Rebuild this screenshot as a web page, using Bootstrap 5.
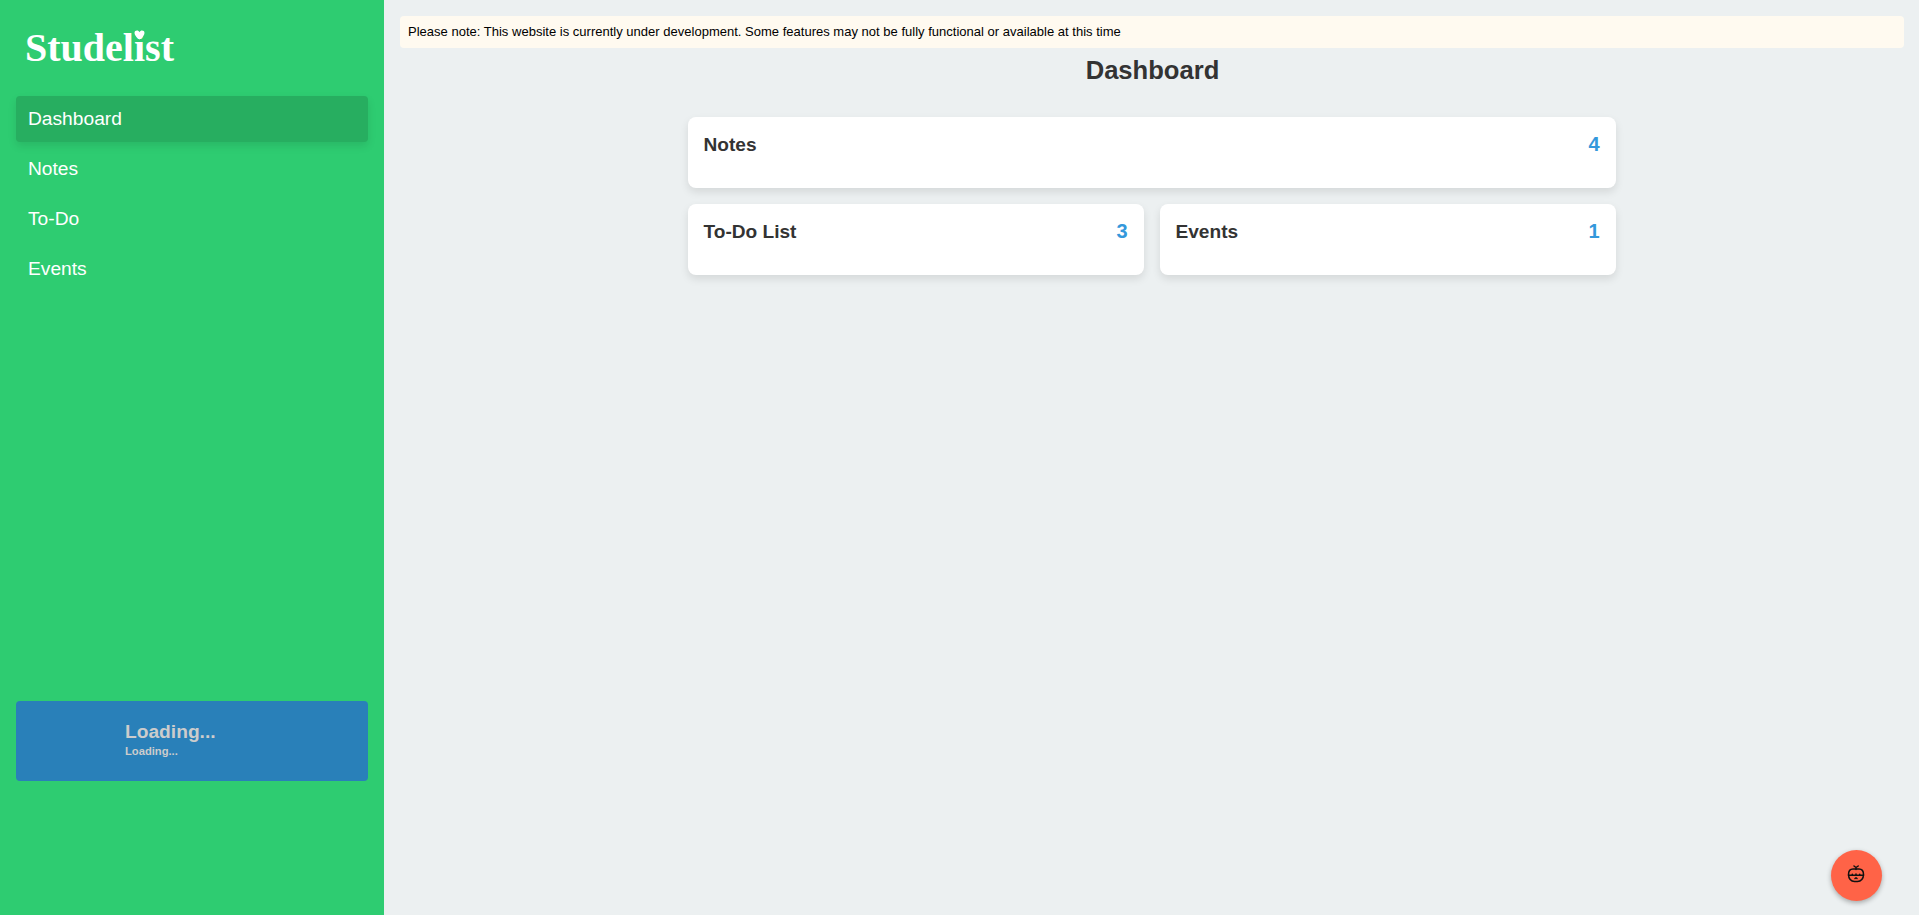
<!DOCTYPE html>
<html lang="en">
<head>
<meta charset="utf-8">
<meta name="viewport" content="width=device-width, initial-scale=1">
<title>Studelist</title>
<link rel="stylesheet" href="https://cdn.jsdelivr.net/npm/bootstrap@5.3.0/dist/css/bootstrap.min.css">
<style>
body { font-family: "Liberation Sans", Arial, sans-serif; background: #ecf0f1; color: #333; line-height: 1.2; }
.sidebar { width: 384px; background: #2ecc71; }
.brand-name { font: bold 40px/46px "Liberation Serif", serif; color: #fff; height: 64px; padding: 9px 0 0 9px; margin-bottom: 16px; }
.brand-i { position: relative; }
.brand-i svg { position: absolute; left: 0; top: 5px; width: 11px; height: 10px; }
.sidebar .nav-link { color: #fff; font-size: 19.2px; line-height: 22px; padding: 12px; border-radius: 4px; height: 46px; }
.sidebar .nav-link.active { background: #27ae60; box-shadow: 0 4px 8px rgba(0,0,0,.1); }
.account { background: #2980b9; color: #ccc; height: 80px; border-radius: 4px; margin-bottom: 118px; padding: 0 0 3px 109px; font-weight: bold; }
.account-name { font-size: 19.2px; line-height: 22px; }
.account-mail { font-size: 11.2px; line-height: 13px; margin-top: 2px; }
.notice { background: #fffaf0; color: #000; font-size: 13px; line-height: 16px; padding: 8px; border-radius: 4px; letter-spacing: .01px; margin-right: -1px; }
.page-title { font-size: 25.6px; font-weight: bold; line-height: 30px; margin: 7px -2px 32px 0; }
.tiles { width: 928px; }
.tile { height: 71px; background: #fff; border-radius: 8px; padding: 16px; box-shadow: 0 4px 8px rgba(0,0,0,.1); }
.tile h3 { font-size: 19.1px; font-weight: bold; line-height: 23px; margin: 0; }
.tile-count { color: #3498db; font-size: 20px; font-weight: bold; line-height: 22px; }
.fab { width: 51px; height: 51px; right: 37.5px; bottom: 14.5px; background: #ff6347; border: 0; box-shadow: 0 2px 5px rgba(0,0,0,.3); }
.fab svg { margin: -2px 1px 0 0; }
</style>
</head>
<body>
<div class="d-flex vh-100">
  <aside class="sidebar d-flex flex-column flex-shrink-0 p-3">
    <div class="brand-name">Studel<span class="brand-i">i<svg viewBox="0 0 11 10"><path d="M5.5 9.500C3 7.500 .5 5.500 .5 3C.5 0 4.500 -.2 5.500 2.200C6.500 -.2 10.500 0 10.500 3C10.500 5.500 8 7.500 5.500 9.500Z" fill="#fff"/></svg></span>st</div>
    <nav class="nav flex-column gap-1">
      <a class="nav-link active" href="#">Dashboard</a>
      <a class="nav-link" href="#">Notes</a>
      <a class="nav-link" href="#">To-Do</a>
      <a class="nav-link" href="#">Events</a>
    </nav>
    <div class="account mt-auto d-flex flex-column justify-content-center">
      <div class="account-name">Loading...</div>
      <div class="account-mail">Loading...</div>
    </div>
  </aside>
  <main class="flex-grow-1 p-3">
    <div class="notice">Please note: This website is currently under development. Some features may not be fully functional or available at this time</div>
    <h1 class="page-title text-center">Dashboard</h1>
    <div class="tiles mx-auto d-flex flex-column gap-3">
      <div class="tile d-flex justify-content-between align-items-start"><h3>Notes</h3><span class="tile-count">4</span></div>
      <div class="d-flex gap-3">
        <div class="tile flex-fill w-50 d-flex justify-content-between align-items-start"><h3>To-Do List</h3><span class="tile-count">3</span></div>
        <div class="tile flex-fill w-50 d-flex justify-content-between align-items-start"><h3>Events</h3><span class="tile-count">1</span></div>
      </div>
    </div>
  </main>
</div>
<button class="fab position-fixed rounded-circle d-flex align-items-center justify-content-center p-0" aria-label="Timer">
  <svg width="18" height="18" viewBox="0 0 18 18" fill="none" stroke="#111" stroke-width="1.5" stroke-linecap="round" stroke-linejoin="round">
    <path d="M9 4.500V2.500M9 2.500L7 1M9 2.500L11.200 1"/>
    <path d="M6 4H12C15 4 16.500 6.500 16.500 9.500C16.500 13.500 14 16.500 10.500 16.500H7.500C4 16.500 1.500 13.500 1.500 9.500C1.500 6.500 3 4 6 4Z"/>
    <path d="M1.500 10.300H16.500M5.300 10V9.300M9 10V9M12.700 10V9.300M8 13.500L9 12.800L10 13.500"/>
  </svg>
</button>
<script src="https://cdn.jsdelivr.net/npm/bootstrap@5.3.0/dist/js/bootstrap.bundle.min.js"></script>
</body>
</html>
